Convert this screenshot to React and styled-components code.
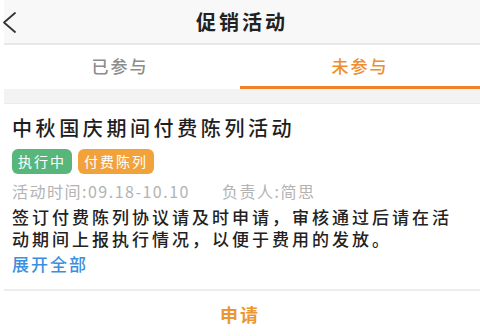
import React, { useState } from 'react';
import styled, { createGlobalStyle } from 'styled-components';

const GlobalStyle = createGlobalStyle`
  html, body {
    margin: 0;
    padding: 0;
    background: #fff;
    font-family: "Noto Sans CJK SC", "Noto Sans", sans-serif;
  }
`;

const Page = styled.div`
  width: 480px;
  height: 336px;
  overflow: hidden;
  background: #fff;
  display: flex;
  flex-direction: column;
`;

const Header = styled.div`
  height: 43px;
  display: grid;
  grid-template-columns: 44px 1fr 44px;
  align-items: center;
  background: #f8f8f8;
  border-bottom: 2px solid #e8e8e8;
  margin-left: 4px;
  padding-right: 4px;
`;

const BackButton = styled.button`
  border: 0;
  background: none;
  padding: 0;
  margin-left: -4px;
  height: 43px;
  display: flex;
  align-items: center;
  cursor: pointer;
`;

const Title = styled.h1`
  margin: 0;
  text-align: center;
  font-size: 20px;
  font-weight: 700;
  letter-spacing: 3px;
  color: #222;
  margin-left: 4px;
`;

const Tabs = styled.div`
  display: flex;
  height: 47px;
`;

const Tab = styled.div`
  flex: 1;
  display: flex;
  align-items: center;
  justify-content: center;
  font-size: 17px;
  font-weight: 500;
  letter-spacing: 2px;
  color: ${(p) => (p.$active ? '#ef8d2c' : '#8c8c8c')};
  border-bottom: 3px solid ${(p) => (p.$active ? '#f0822a' : 'transparent')};
  cursor: pointer;
`;

const Gap = styled.div`
  height: 15px;
  margin-left: 4px;
  background: #f3f3f3;
  border-bottom: 1px solid #ebebeb;
`;

const Card = styled.div`
  padding: 10px 12px 0;
  display: flex;
  flex-direction: column;
`;

const CardTitle = styled.div`
  font-size: 20px;
  font-weight: 500;
  line-height: 28px;
  letter-spacing: 3.6px;
  color: #1e1e1e;
`;

const TagRow = styled.div`
  display: flex;
  gap: 6px;
  margin-top: 7px;
`;

const Tag = styled.span`
  height: 25px;
  padding: 0 6px;
  border-radius: 6px;
  display: inline-flex;
  align-items: center;
  font-size: 14px;
  letter-spacing: 2px;
  color: #fff;
  background: ${(p) => p.$color};
`;

const Meta = styled.div`
  display: flex;
  gap: 32px;
  margin-top: 6px;
  font-size: 16px;
  line-height: 22px;
  letter-spacing: 1.5px;
  color: #b3b3b3;
`;

const Body = styled.p`
  margin: 4px 0 0;
  font-size: 17px;
  font-weight: 500;
  line-height: 22px;
  letter-spacing: 3px;
  color: #222;
`;

const More = styled.a`
  margin-top: 3px;
  font-size: 17px;
  font-weight: 500;
  line-height: 22px;
  letter-spacing: 2px;
  color: #3b8fde;
  cursor: pointer;
`;

const Divider = styled.div`
  margin: 14px 0 0 4px;
  height: 3px;
  background: #ececec;
`;

const ApplyButton = styled.button`
  border: 0;
  background: none;
  padding: 0;
  height: 48px;
  font-family: inherit;
  font-size: 18px;
  font-weight: 700;
  letter-spacing: 2px;
  color: #eb9632;
  cursor: pointer;
`;

export default function App() {
  const [tab, setTab] = useState(1);
  return (
    <Page>
      <GlobalStyle />
      <Header>
        <BackButton aria-label="返回">
          <svg width="20" height="24" viewBox="0 0 20 24">
            <polyline points="15,3 4,12.5 15,22" fill="none" stroke="#333" strokeWidth="1.8" strokeLinecap="round" strokeLinejoin="round" />
          </svg>
        </BackButton>
        <Title>促销活动</Title>
        <span />
      </Header>
      <Tabs>
        <Tab $active={tab === 0} onClick={() => setTab(0)}>已参与</Tab>
        <Tab $active={tab === 1} onClick={() => setTab(1)}>未参与</Tab>
      </Tabs>
      <Gap />
      <Card>
        <CardTitle>中秋国庆期间付费陈列活动</CardTitle>
        <TagRow>
          <Tag $color="#58b67b">执行中</Tag>
          <Tag $color="#f1a23b">付费陈列</Tag>
        </TagRow>
        <Meta>
          <span>活动时间:09.18-10.10</span>
          <span>负责人:简思</span>
        </Meta>
        <Body>签订付费陈列协议请及时申请，审核通过后请在活动期间上报执行情况，以便于费用的发放。</Body>
        <More>展开全部</More>
      </Card>
      <Divider />
      <ApplyButton>申请</ApplyButton>
    </Page>
  );
}
